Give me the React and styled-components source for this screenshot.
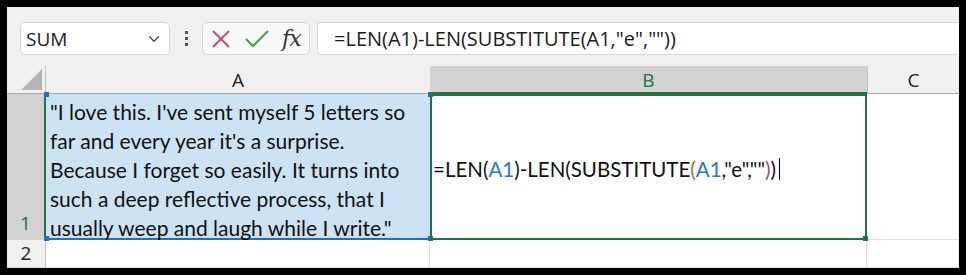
import React from 'react';
import styled, { createGlobalStyle } from 'styled-components';
import { ChevronDown } from 'lucide-react';

const GlobalStyle = createGlobalStyle`
    html, body {
        margin: 0;
        padding: 0;
        background: #000;
    }
`;

const Frame = styled.div`
    width: 966px;
    height: 275px;
    box-sizing: border-box;
    padding: 7px;
    background: #000;
    overflow: hidden;
`;

const Window = styled.div`
    width: 100%;
    height: 100%;
    background: #f0f0f0;
    display: flex;
    flex-direction: column;
    overflow: hidden;
`;

const Toolbar = styled.div`
    display: flex;
    align-items: center;
    height: 59px;
    box-sizing: border-box;
    padding: 8px 0 4px 13px;
`;

const NameBox = styled.div`
    width: 150px;
    height: 33px;
    box-sizing: border-box;
    display: flex;
    align-items: center;
    justify-content: space-between;
    padding: 0 6px 0 5px;
    background: #fff;
    border: 1px solid #d6d6d6;
    border-radius: 5px;
    font-family: "Open Sans", "Noto Sans", sans-serif;
    font-size: 19px;
    color: #1b1b1b;
`;

const Dots = styled.div`
    width: 32px;
    display: flex;
    flex-direction: column;
    align-items: center;
    gap: 3px;
`;

const Dot = styled.span`
    width: 3px;
    height: 3px;
    background: #555;
`;

const IconBox = styled.div`
    width: 108px;
    height: 33px;
    box-sizing: border-box;
    display: flex;
    align-items: center;
    gap: 14px;
    padding-left: 8px;
    background: #f8f8f8;
    border: 1px solid #d6d6d6;
    border-radius: 5px;
`;

const Fx = styled.span`
    font-family: "DejaVu Serif", "Liberation Serif", serif;
    font-style: italic;
    font-size: 22px;
    line-height: 22px;
    color: #333;
    letter-spacing: -1px;
    margin-left: -1px;
`;

const FormulaBar = styled.div`
    flex: 1;
    height: 33px;
    margin-left: 7px;
    box-sizing: border-box;
    display: flex;
    align-items: center;
    padding-left: 16px;
    background: #fff;
    border: 1px solid #d6d6d6;
    border-right: none;
    border-radius: 5px 0 0 5px;
    font-family: "Open Sans", "Noto Sans", sans-serif;
    font-size: 20px;
    color: #1b1b1b;
    white-space: nowrap;
`;

const Sheet = styled.div`
    display: grid;
    grid-template-columns: 39px 384px 437px 1fr;
    grid-template-rows: 28px 146px 28px;
    background: #fff;
`;

const ColHead = styled.div`
    box-sizing: border-box;
    display: flex;
    align-items: center;
    justify-content: center;
    background: ${p => (p.$selected ? '#d2d2d2' : '#f0f0f0')};
    color: ${p => (p.$selected ? '#217346' : '#222')};
    border-bottom: ${p => (p.$selected ? '2px solid #217346' : '1px solid #a8a8a8')};
    border-left: ${p => (p.$divider ? '1px solid #c4c4c4' : 'none')};
    font-family: "Open Sans", "Noto Sans", sans-serif;
    font-size: 19px;
    padding-top: 1px;
`;

const Corner = styled(ColHead)`
    justify-content: flex-end;
    align-items: flex-end;
    padding: 0 3px 3px 0;
    border-right: 1px solid #c4c4c4;
`;

const RowHead = styled.div`
    box-sizing: border-box;
    display: flex;
    align-items: flex-end;
    justify-content: center;
    padding-bottom: ${p => (p.$selected ? '2px' : '0')};
    background: ${p => (p.$selected ? '#d2d2d2' : '#f0f0f0')};
    color: ${p => (p.$selected ? '#217346' : '#222')};
    border-right: ${p => (p.$selected ? '2px solid #217346' : '1px solid #c4c4c4')};
    border-bottom: 1px solid #d4d4d4;
    font-family: "Open Sans", "Noto Sans", sans-serif;
    font-size: 19px;
    line-height: 27px;
`;

const RefCell = styled.div`
    position: relative;
    box-sizing: border-box;
    background: #cde2f3;
    border-bottom: 2px solid #1f6fc4;
    padding: 3px 4px 0 4px;
    font-family: Lato, "Open Sans", sans-serif;
    font-size: 21px;
    line-height: 29px;
    color: #111;
    white-space: pre-line;
`;

const Handle = styled.span`
    position: absolute;
    width: 5px;
    height: 5px;
    background: ${p => p.$color};
    ${p => (p.$top ? 'top: -2px;' : 'bottom: -3px;')}
    ${p => (p.$left ? 'left: -2px;' : 'right: -3px;')}
`;

const ActiveCell = styled.div`
    position: relative;
    box-sizing: border-box;
    display: flex;
    align-items: center;
    border: 2px solid #217346;
    padding: 4px 0 0 1px;
    font-family: Lato, "Open Sans", sans-serif;
    font-size: 20.5px;
    color: #111;
    white-space: nowrap;
`;

const Cell = styled.div`
    box-sizing: border-box;
    border-bottom: 1px solid #e1e1e1;
    border-right: 1px solid #e1e1e1;
`;

const Token = styled.span`
    color: ${p => p.$color || 'inherit'};
`;

const Caret = styled.span`
    display: inline-block;
    width: 1px;
    height: 22px;
    margin-left: 3px;
    background: #000;
`;

const cellText = `"I love this. I've sent myself 5 letters so
far and every year it's a surprise.
Because I forget so easily. It turns into
such a deep reflective process, that I
usually weep and laugh while I write."`;

const REF = '#2a78c6';

const App = () => (
    <>
        <GlobalStyle />
        <Frame>
            <Window>
                <Toolbar>
                    <NameBox>
                        SUM
                        <ChevronDown size={18} color="#444" strokeWidth={1.6} />
                    </NameBox>
                    <Dots>
                        <Dot />
                        <Dot />
                        <Dot />
                    </Dots>
                    <IconBox>
                        <svg width="20" height="20" viewBox="0 0 20 20">
                            <path d="M2 2 L18 18 M18 2 L2 18" stroke="#c9456a" strokeWidth="1.8" fill="none" />
                        </svg>
                        <svg width="24" height="18" viewBox="0 0 24 18">
                            <path d="M1 9 L8 16 L23 1" stroke="#3f9e5a" strokeWidth="2" fill="none" />
                        </svg>
                        <Fx>fx</Fx>
                    </IconBox>
                    <FormulaBar>=LEN(A1)-LEN(SUBSTITUTE(A1,"e",""))</FormulaBar>
                </Toolbar>

                <Sheet>
                    <Corner>
                        <svg width="21" height="21" viewBox="0 0 21 21">
                            <polygon points="21,0 21,21 0,21" fill="#b5b5b5" />
                        </svg>
                    </Corner>
                    <ColHead>A</ColHead>
                    <ColHead $selected>B</ColHead>
                    <ColHead $divider>C</ColHead>

                    <RowHead $selected>1</RowHead>
                    <RefCell>
                        {cellText}
                        <Handle $color="#1f6fc4" $top $left />
                        <Handle $color="#1f6fc4" $top />
                        <Handle $color="#1f6fc4" $left />
                        <Handle $color="#1f6fc4" />
                    </RefCell>
                    <ActiveCell>
                        =LEN(<Token $color={REF}>A1</Token>)-LEN(SUBSTITUTE<Token $color="#b5693a">(</Token>
                        <Token $color={REF}>A1</Token>,"e",""<Token $color="#9b4a8e">)</Token>)
                        <Caret />
                        <Handle $color="#217346" />
                    </ActiveCell>
                    <Cell />

                    <RowHead>2</RowHead>
                    <Cell />
                    <Cell />
                    <Cell />
                </Sheet>
            </Window>
        </Frame>
    </>
);

export default App;
